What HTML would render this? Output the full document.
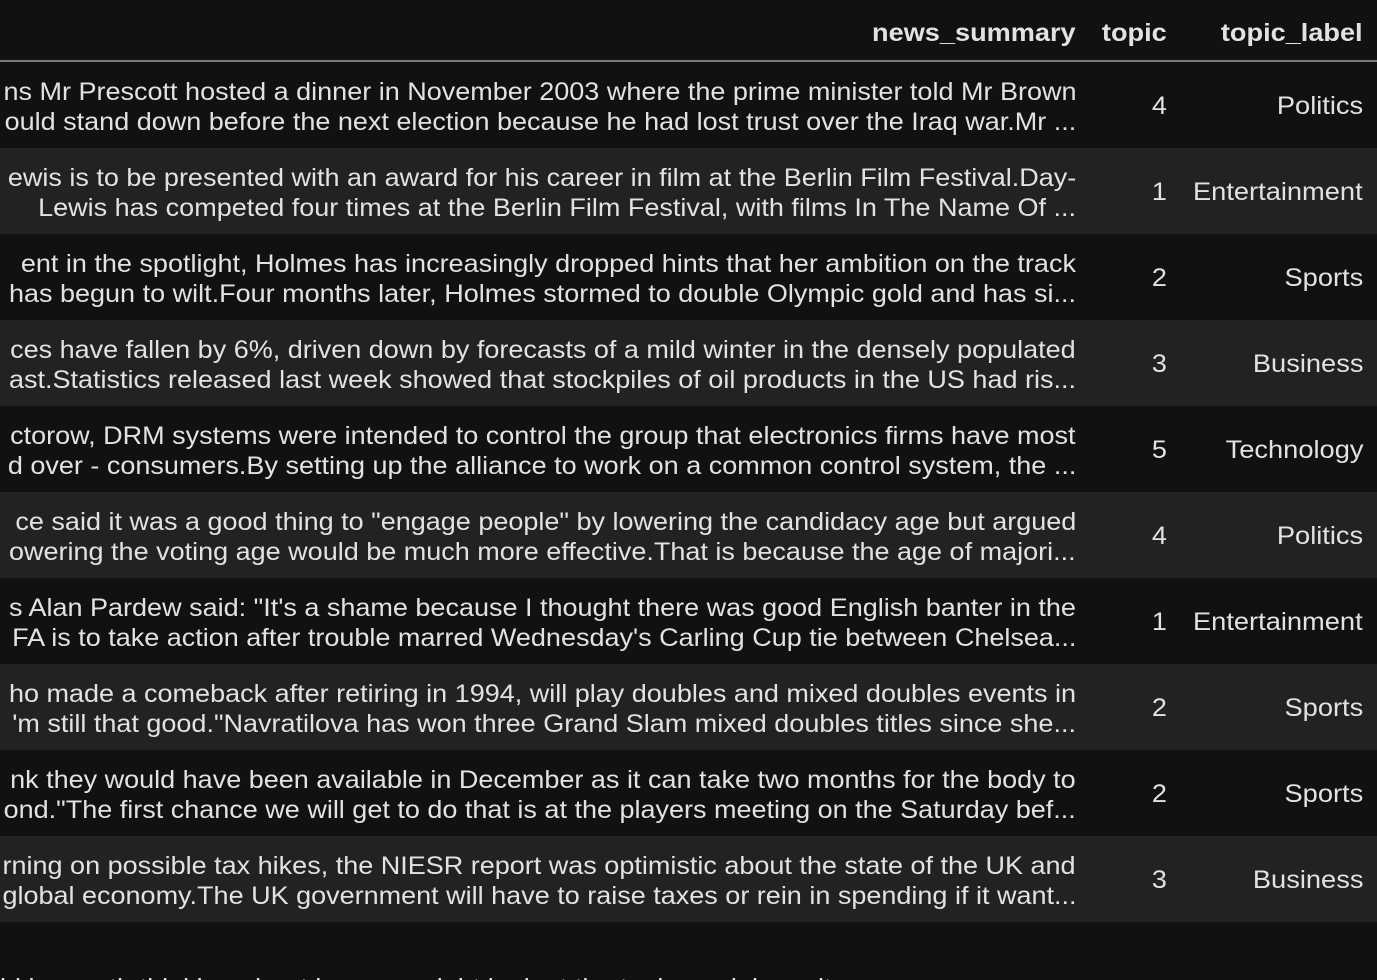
<!DOCTYPE html>
<html><head><style>
html,body{margin:0;padding:0;background:#111;width:1377px;height:980px;overflow:hidden}
body{font-family:"Liberation Sans",sans-serif;color:#e2e2e2;font-size:25px;position:relative}
.h{position:absolute;top:16px;font-weight:bold;white-space:nowrap;line-height:34px;transform:scaleX(1.085);transform-origin:right center}
.hr{position:absolute;top:60px;left:0;width:1377px;height:2px;background:#7a7a7a}
.row{position:absolute;left:0;width:1377px;height:86px}
.row.alt{background:#222}
.s{position:absolute;right:301px;white-space:nowrap;text-align:right;line-height:30px;transform:scaleX(1.08);transform-origin:right center}
.t{position:absolute;right:210px;top:27px;line-height:34px;transform:scaleX(1.08);transform-origin:right center}
.l{position:absolute;right:14px;top:27px;line-height:34px;white-space:nowrap;transform:scaleX(1.09);transform-origin:right center}
</style></head><body>
<div class="h" style="right:301px">news_summary</div>
<div class="h" style="right:210px">topic</div>
<div class="h" style="right:14px">topic_label</div>
<div class="hr"></div>

<div class="row" style="top:62px"><div class="s" style="top:15px">ns Mr Prescott hosted a dinner in November 2003 where the prime minister told Mr Brown</div><div class="s" style="top:45px">ould stand down before the next election because he had lost trust over the Iraq war.Mr ...</div><div class="t">4</div><div class="l">Politics</div></div>
<div class="row alt" style="top:148px"><div class="s" style="top:15px">ewis is to be presented with an award for his career in film at the Berlin Film Festival.Day-</div><div class="s" style="top:45px">Lewis has competed four times at the Berlin Film Festival, with films In The Name Of ...</div><div class="t">1</div><div class="l">Entertainment</div></div>
<div class="row" style="top:234px"><div class="s" style="top:15px">ent in the spotlight, Holmes has increasingly dropped hints that her ambition on the track</div><div class="s" style="top:45px">has begun to wilt.Four months later, Holmes stormed to double Olympic gold and has si...</div><div class="t">2</div><div class="l">Sports</div></div>
<div class="row alt" style="top:320px"><div class="s" style="top:15px">ces have fallen by 6%, driven down by forecasts of a mild winter in the densely populated</div><div class="s" style="top:45px">ast.Statistics released last week showed that stockpiles of oil products in the US had ris...</div><div class="t">3</div><div class="l">Business</div></div>
<div class="row" style="top:406px"><div class="s" style="top:15px">ctorow, DRM systems were intended to control the group that electronics firms have most</div><div class="s" style="top:45px">d over - consumers.By setting up the alliance to work on a common control system, the ...</div><div class="t">5</div><div class="l">Technology</div></div>
<div class="row alt" style="top:492px"><div class="s" style="top:15px">ce said it was a good thing to "engage people" by lowering the candidacy age but argued</div><div class="s" style="top:45px">owering the voting age would be much more effective.That is because the age of majori...</div><div class="t">4</div><div class="l">Politics</div></div>
<div class="row" style="top:578px"><div class="s" style="top:15px">s Alan Pardew said: "It's a shame because I thought there was good English banter in the</div><div class="s" style="top:45px">FA is to take action after trouble marred Wednesday's Carling Cup tie between Chelsea...</div><div class="t">1</div><div class="l">Entertainment</div></div>
<div class="row alt" style="top:664px"><div class="s" style="top:15px">ho made a comeback after retiring in 1994, will play doubles and mixed doubles events in</div><div class="s" style="top:45px">'m still that good."Navratilova has won three Grand Slam mixed doubles titles since she...</div><div class="t">2</div><div class="l">Sports</div></div>
<div class="row" style="top:750px"><div class="s" style="top:15px">nk they would have been available in December as it can take two months for the body to</div><div class="s" style="top:45px">ond."The first chance we will get to do that is at the players meeting on the Saturday bef...</div><div class="t">2</div><div class="l">Sports</div></div>
<div class="row alt" style="top:836px"><div class="s" style="top:15px">rning on possible tax hikes, the NIESR report was optimistic about the state of the UK and</div><div class="s" style="top:45px">global economy.The UK government will have to raise taxes or rein in spending if it want...</div><div class="t">3</div><div class="l">Business</div></div>

<div style="position:absolute;left:0;top:973px;white-space:nowrap;line-height:30px;transform:scaleX(1.08);transform-origin:left center">ld be worth thinking about how we might look at the topic model results</div>
</body></html>
